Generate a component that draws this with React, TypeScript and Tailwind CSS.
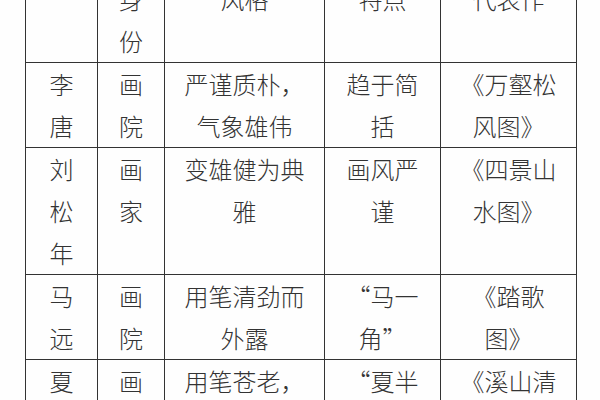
const rows: string[][] = [
  ["李唐", "画院", "严谨质朴，气象雄伟", "趋于简括", "《万壑松风图》"],
  ["刘松年", "画家", "变雄健为典雅", "画风严谨", "《四景山水图》"],
  ["马远", "画院", "用笔清劲而外露", "“马一角”", "《踏歌图》"],
  ["夏圭", "画院", "用笔苍老，墨气淋漓", "“夏半边”", "《溪山清远图》"],
];

const header = ["", "身份", "风格", "特点", "代表作"];

const cell = "border border-[#333] px-4 align-top text-center break-all";

export default function App() {
  return (
    <div
      className="h-[400px] w-[600px] overflow-hidden bg-[#fefefe] text-[#333]"
      style={{ fontFamily: '"Noto Sans CJK SC", "Noto Sans", sans-serif' }}
    >
      <table className="ml-[25px] mt-[-23px] w-[551px] table-fixed border-collapse text-[24px] font-light leading-[42px]">
        <colgroup>
          <col className="w-[72px]" />
          <col className="w-[67px]" />
          <col className="w-[160px]" />
          <col className="w-[116px]" />
          <col className="w-[136px]" />
        </colgroup>
        <thead>
          <tr className="h-[85px]">
            {header.map((h, i) => (
              <th key={i} className={`${cell} font-light`}>
                {h}
              </th>
            ))}
          </tr>
        </thead>
        <tbody>
          {rows.map((r, i) => (
            <tr key={i}>
              {r.map((c, j) => (
                <td key={j} className={cell}>
                  {c}
                </td>
              ))}
            </tr>
          ))}
        </tbody>
      </table>
    </div>
  );
}
